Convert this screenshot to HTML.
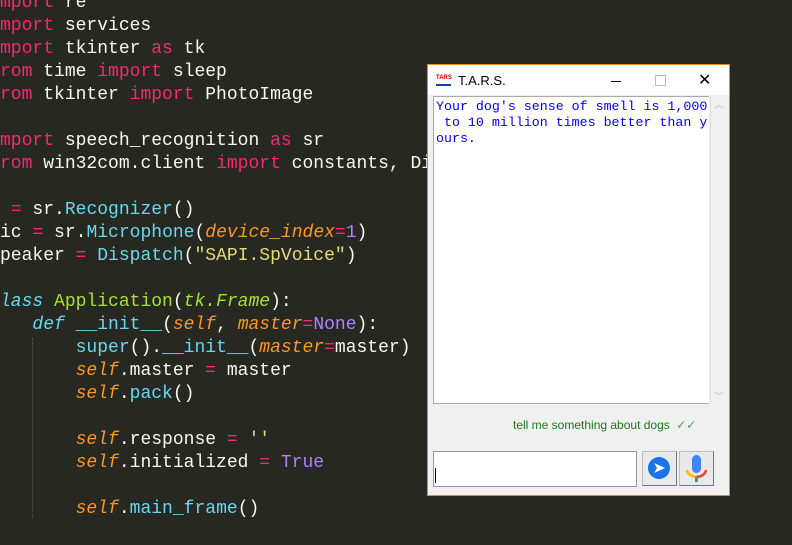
<!DOCTYPE html>
<html><head><style>
body{margin:0;width:792px;height:545px;overflow:hidden;background:#272822;position:relative}
pre{margin:0;position:absolute;left:-10.8px;top:-8px;font:18px/23px "Liberation Mono",monospace;color:#f8f8f2;}
.k{color:#f92672}.c{color:#66d9ef}.o{color:#fd971f;font-style:italic}.p{color:#ae81ff}.s{color:#e6db74}.g{color:#a6e22e}.ci{color:#66d9ef;font-style:italic}.gi{color:#a6e22e;font-style:italic}
.guide{position:absolute;left:32px;top:338px;height:180px;border-left:1px dotted #555}
.win{position:absolute;left:427px;top:64px;width:301px;height:430px;border:1px solid #e8891a;background:#f0f0f0}
.title{height:30px;background:#fff;position:relative;font:13px "Liberation Sans",sans-serif;color:#000}
.txt{position:absolute;left:5px;top:31px;width:275px;height:306px;background:#fff;border:1px solid #aaa;border-right:none;overflow:hidden}
.txt div{font:13.3px/16px "Liberation Mono",monospace;color:#0000ff;padding:2px 0 0 2px;white-space:pre}
.sb{position:absolute;left:282px;top:31px;width:16px;height:307px;background:#f0f0f0;border-left:1px solid #ddd}
.ent{position:absolute;left:5px;top:386px;width:202px;height:34px;background:#fff;border:1px solid #999}
.btn{position:absolute;top:386px;width:33px;height:33px;background:#e9e9e9;border:1px solid #bbb;border-right-color:#777;border-bottom-color:#777}
</style></head><body>
<pre><span class="k">import</span> re
<span class="k">import</span> services
<span class="k">import</span> tkinter <span class="k">as</span> tk
<span class="k">from</span> time <span class="k">import</span> sleep
<span class="k">from</span> tkinter <span class="k">import</span> PhotoImage

<span class="k">import</span> speech_recognition <span class="k">as</span> sr
<span class="k">from</span> win32com.client <span class="k">import</span> constants, Dispatch

r <span class="k">=</span> sr.<span class="c">Recognizer</span>()
mic <span class="k">=</span> sr.<span class="c">Microphone</span>(<span class="o">device_index</span><span class="k">=</span><span class="p">1</span>)
speaker <span class="k">=</span> <span class="c">Dispatch</span>(<span class="s">"SAPI.SpVoice"</span>)

<span class="ci">class</span> <span class="g">Application</span>(<span class="gi">tk.Frame</span>):
    <span class="ci">def</span> <span class="c">__init__</span>(<span class="o">self</span>, <span class="o">master</span><span class="k">=</span><span class="p">None</span>):
        <span class="c">super</span>().<span class="c">__init__</span>(<span class="o">master</span><span class="k">=</span>master)
        <span class="o">self</span>.master <span class="k">=</span> master
        <span class="o">self</span>.<span class="c">pack</span>()

        <span class="o">self</span>.response <span class="k">=</span> <span class="s">''</span>
        <span class="o">self</span>.initialized <span class="k">=</span> <span class="p">True</span>

        <span class="o">self</span>.<span class="c">main_frame</span>()
</pre>
<div class="guide"></div>
<div class="win">
 <div class="title">
  <div style="position:absolute;left:8px;top:9px;width:15px;height:10px;border-bottom:2px solid #1a3cb8;color:#d00;font:bold 6px/8px 'Liberation Sans',sans-serif">TARS</div>
  <span style="position:absolute;left:30px;top:8px">T.A.R.S.</span>
  <div style="position:absolute;left:183px;top:16px;width:10px;border-top:1px solid #000"></div>
  <div style="position:absolute;left:227px;top:10px;width:9px;height:9px;border:1px solid #bbb"></div>
  <span style="position:absolute;left:270px;top:5px;font-size:16px">✕</span>
 </div>
 <div class="txt"><div>Your dog's sense of smell is 1,000
 to 10 million times better than y
ours.</div></div>
 <div class="sb"><span style="position:absolute;left:3px;top:0;color:#bbb;font-size:10px">︿</span><span style="position:absolute;left:3px;top:292px;color:#bbb;font-size:10px">﹀</span></div>
 <div style="position:absolute;left:85px;top:353px;font:12px 'Liberation Sans',sans-serif;color:#1a7a1a">tell me something about dogs <span style="color:#5a9a5a;margin-left:3px">✓✓</span></div>
 <div class="ent"><div style="position:absolute;left:1px;top:16px;height:15px;border-left:1px solid #000"></div></div>
 <div class="btn" style="left:214px"><svg width="33" height="33" viewBox="0 0 33 33"><circle cx="16" cy="16" r="11" fill="#1a73e8"/><path d="M11 11 L22 16 L11 21 L14 16Z" fill="#fff"/></svg></div>
 <div class="btn" style="left:251px"><svg width="33" height="33" viewBox="0 0 33 33"><rect x="12" y="3" width="9" height="18" rx="4.5" fill="#4285f4"/><path d="M7 18 Q8 24 16.5 25" stroke="#fbbc05" stroke-width="2.5" fill="none"/><path d="M26 18 Q25 24 16.5 25" stroke="#ea4335" stroke-width="2.5" fill="none"/><rect x="15" y="25" width="3" height="5" fill="#34a853"/></svg></div>
</div>
</body></html>
